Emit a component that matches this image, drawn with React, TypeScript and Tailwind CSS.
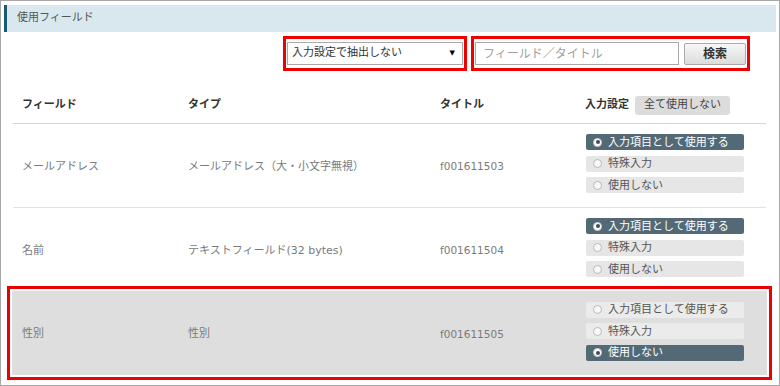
import React from 'react';

const FONT = { fontFamily: '"DejaVu Sans", "Noto Sans CJK JP", "Noto Sans", sans-serif' };

type Field = { name: string; type: string; title: string; selected: number };

const fields: Field[] = [
    { name: 'メールアドレス', type: 'メールアドレス（大・小文字無視）', title: 'f001611503', selected: 0 },
    { name: '名前', type: 'テキストフィールド(32 bytes)', title: 'f001611504', selected: 0 },
    { name: '性別', type: '性別', title: 'f001611505', selected: 2 },
];

const OPTIONS = ['入力項目として使用する', '特殊入力', '使用しない'];

// radio pill
function Option({ label, active, light }: { label: string; active: boolean; light?: boolean }) {
    return (
        <div
            className={`w-[158px] h-[16px] flex items-center pl-[7px] gap-[6px] rounded-[2px] text-[11px] leading-none ${
                active ? 'bg-[#536a76] text-white' : light ? 'bg-[#ebebeb] text-[#555]' : 'bg-[#e6e6e6] text-[#555]'
            }`}
        >
            {active ? (
                <span className="w-[9px] h-[9px] rounded-full bg-white border border-[#ccc] flex items-center justify-center">
                    <span className="w-[4px] h-[4px] rounded-full bg-[#3d4f58]" />
                </span>
            ) : (
                <span className="w-[9px] h-[9px] rounded-full bg-[#f8f8f8] border border-[#b8b8b8]" />
            )}
            <span>{label}</span>
        </div>
    );
}

function RowCells({ f, light }: { f: Field; light?: boolean }) {
    return (
        <>
            <div className="pt-[7px] text-[11px] text-[#7a7a7a]">{f.name}</div>
            <div className="pt-[7px] text-[11px] text-[#7a7a7a]">{f.type}</div>
            <div className="pt-[7px] text-[10.5px] text-[#7a7a7a]">{f.title}</div>
            <div className="flex flex-col gap-[5.5px] pl-[1px]">
                {OPTIONS.map((o, i) => (
                    <Option key={o} label={o} active={i === f.selected} light={light} />
                ))}
            </div>
        </>
    );
}

export default function App() {
    return (
        <div
            className="w-[780px] h-[386px] overflow-hidden border border-[#a8a8a8] bg-white px-[3px] pt-[4px]"
            style={FONT}
        >
            {/* Section header */}
            <div className="h-[27px] flex items-center border-l-[3px] border-[#175a74] bg-[#d9e8ef] pl-[10px] text-[11px] text-[#555]">
                使用フィールド
            </div>

            {/* Toolbar */}
            <div className="mt-[4px] flex justify-end gap-[4px] pr-[26px]">
                <div className="border-[3px] border-[#ee0000] px-[1px] py-[3px]">
                    <div className="w-[176px] h-[23px] border border-[#aaa] bg-white flex items-center justify-between pl-[4px] pr-[7px] text-[11px] text-[#333]">
                        <span>入力設定で抽出しない</span>
                        <span className="text-[7px] text-black">▼</span>
                    </div>
                </div>
                <div className="border-[3px] border-[#ee0000] px-[1px] py-[3px] flex gap-[5px]">
                    <div className="w-[204px] h-[23px] border border-[#aaa] bg-white flex items-center pl-[7px] text-[12px] text-[#a0a0a0]">
                        フィールド／タイトル
                    </div>
                    <button className="w-[62px] h-[22px] mt-[1px] border border-[#aaa] rounded-[2px] bg-gradient-to-b from-[#f7f7f7] to-[#dcdcdc] text-[12px] font-bold text-[#333]">
                        検索
                    </button>
                </div>
            </div>

            {/* Table */}
            <div className="ml-[9px] w-[753px]">
                <div className="h-[53px] pt-[16px] pl-[9px] grid grid-cols-[166px_252px_145px_1fr] items-center border-b border-[#d6d6d6] text-[11px] font-bold text-[#333]">
                    <div>フィールド</div>
                    <div>タイプ</div>
                    <div>タイトル</div>
                    <div className="flex items-center gap-[6px]">
                        <span>入力設定</span>
                        <span className="h-[19px] px-[9px] flex items-center rounded-[3px] bg-[#dcdcdc] font-normal text-[#444]">
                            全て使用しない
                        </span>
                    </div>
                </div>

                <div className="h-[84px] pl-[9px] pb-[4px] grid grid-cols-[166px_252px_145px_1fr] items-center border-b border-[#e2e2e2]">
                    <RowCells f={fields[0]} />
                </div>
                <div className="h-[78px] pl-[9px] pt-[1px] grid grid-cols-[166px_252px_145px_1fr] items-center">
                    <RowCells f={fields[1]} />
                </div>

                <div className="-mx-[6px] h-[94px] border-[3px] border-[#ee0000] p-[2px]">
                    <div className="h-full bg-[#dedede] pl-[10px] pb-[4px] grid grid-cols-[166px_252px_145px_1fr] items-center">
                        <RowCells f={fields[2]} light />
                    </div>
                </div>
            </div>
        </div>
    );
}
